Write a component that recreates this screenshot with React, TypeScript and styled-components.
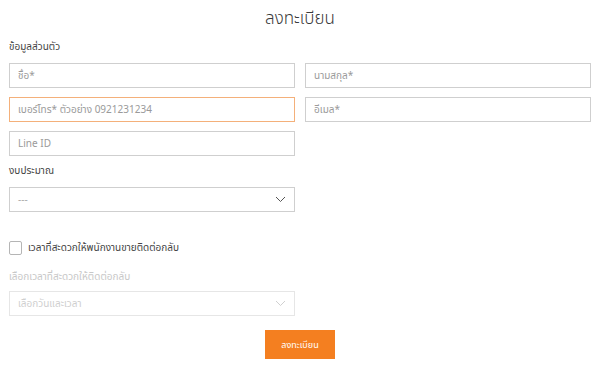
import styled, { createGlobalStyle } from "styled-components";

const Global = createGlobalStyle`
  body {
    margin: 0;
    background: #fff;
    font-family: "Noto Sans Thai", "Noto Sans", "Liberation Sans", sans-serif;
  }
  * { box-sizing: border-box; }
`;

const Page = styled.div`
  width: 600px;
  height: 367px;
  padding: 0 9px;
  display: flex;
  flex-direction: column;
`;

const Title = styled.h1`
  margin: 6px 0 0;
  height: 26px;
  text-align: center;
  font-size: 17px;
  font-weight: 300;
  color: #3a3a3a;
  line-height: 26px;
`;

const SectionLabel = styled.div<{ muted?: boolean }>`
  font-size: 10px;
  line-height: 16px;
  color: ${(p) => (p.muted ? "#c8c8c8" : "#444")};
  margin: ${(p) => (p.muted ? "13px 0 6px" : "7px 0 8px")};
`;

const Grid = styled.div`
  display: grid;
  grid-template-columns: 286px 286px;
  column-gap: 10px;
  row-gap: 9px;
`;

const Input = styled.input<{ active?: boolean }>`
  width: 286px;
  height: 25px;
  border: 1px solid ${(p) => (p.active ? "#f4b07a" : "#cfcfcf")};
  border-radius: 0;
  padding: 0 8px;
  font-family: inherit;
  font-size: 10px;
  color: #333;
  outline: none;
  &::placeholder {
    color: #9a9a9a;
  }
`;

const SelectBox = styled.div<{ disabled?: boolean }>`
  width: 286px;
  height: 25px;
  border: 1px solid ${(p) => (p.disabled ? "#e6e6e6" : "#cfcfcf")};
  display: flex;
  align-items: center;
  justify-content: space-between;
  padding: 0 8px;
  font-size: 10px;
  color: ${(p) => (p.disabled ? "#cfcfcf" : "#aaa")};
`;

const Chevron = ({ color }: { color: string }) => (
  <svg width="11" height="7" viewBox="0 0 11 7">
    <path d="M1 1 L5.5 5.5 L10 1" fill="none" stroke={color} strokeWidth="1" />
  </svg>
);

const CheckRow = styled.label`
  display: flex;
  align-items: center;
  gap: 6px;
  margin-top: 28px;
  font-size: 10px;
  color: #444;
`;

const Box = styled.span`
  width: 13px;
  height: 14px;
  border: 1px solid #b5b5b5;
  border-radius: 2px;
  background: #fff;
`;

const ButtonRow = styled.div`
  display: flex;
  justify-content: center;
  margin-top: 14px;
`;

const Submit = styled.button`
  width: 70px;
  height: 29px;
  border: none;
  background: #f47f20;
  color: #fff;
  font-family: inherit;
  font-size: 9px;
`;

export default function App() {
  return (
    <>
      <Global />
      <Page>
        <Title>ลงทะเบียน</Title>
        <SectionLabel>ข้อมูลส่วนตัว</SectionLabel>
        <Grid>
          <Input placeholder="ชื่อ*" />
          <Input placeholder="นามสกุล*" />
          <Input active placeholder="เบอร์โทร* ตัวอย่าง 0921231234" />
          <Input placeholder="อีเมล*" />
          <Input placeholder="Line ID" />
        </Grid>
        <SectionLabel>งบประมาณ</SectionLabel>
        <SelectBox>
          <span>---</span>
          <Chevron color="#555" />
        </SelectBox>
        <CheckRow>
          <Box />
          เวลาที่สะดวกให้พนักงานขายติดต่อกลับ
        </CheckRow>
        <SectionLabel muted>เลือกเวลาที่สะดวกให้ติดต่อกลับ</SectionLabel>
        <SelectBox disabled>
          <span>เลือกวันและเวลา</span>
          <Chevron color="#d0d0d0" />
        </SelectBox>
        <ButtonRow>
          <Submit>ลงทะเบียน</Submit>
        </ButtonRow>
      </Page>
    </>
  );
}
